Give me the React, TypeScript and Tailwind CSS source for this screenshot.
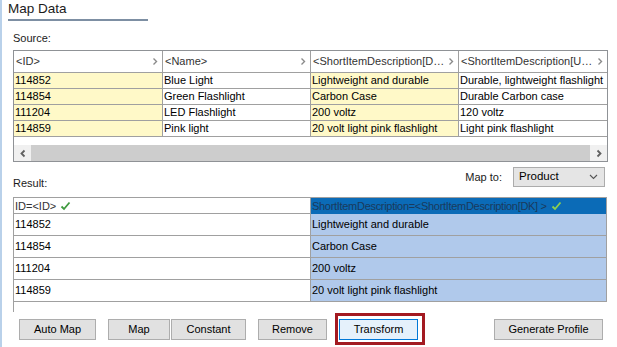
import React from "react";

const Chev = ({ color = "#8a8a8a" }: { color?: string }) => (
  <svg width="6" height="9" viewBox="0 0 6 9" className="shrink-0">
    <polyline points="1.5,1.5 4.5,4.5 1.5,7.5" fill="none" stroke={color} strokeWidth="1.4" />
  </svg>
);

const Check = ({ color }: { color: string }) => (
  <svg width="11" height="10" viewBox="0 0 11 10" className="shrink-0">
    <path d="M1.5 5.5 L4 8 L9.5 1.5" fill="none" stroke={color} strokeWidth="1.8" />
  </svg>
);

const source = [
  ["114852", "Blue Light", "Lightweight and durable", "Durable, lightweight flashlight"],
  ["114854", "Green Flashlight", "Carbon Case", "Durable Carbon case"],
  ["111204", "LED Flashlight", "200 voltz", "120 voltz"],
  ["114859", "Pink light", "20 volt light pink flashlight", "Light pink flashlight"],
];

const headers = ["<ID>", "<Name>", "<ShortItemDescription[D…", "<ShortItemDescription[U…"];

export default function App() {
  return (
    <div className="relative w-[617px] h-[347px] overflow-hidden bg-white border-l-2 border-[#b9d1ea] font-['Liberation_Sans',Arial,sans-serif] text-[11px] text-black">
      {/* Title */}
      <div className="pl-[6px] pt-[1px]">
        <div className="text-[13.5px] leading-[16px] text-[#1b1b1b]">Map Data</div>
        <div className="mt-[2px] w-[140px] h-[2px] bg-[#7d8fa3]" />
      </div>

      {/* Source label */}
      <div className="ml-[11px] mt-[11px] leading-[12px] text-[#1b1b1b]">Source:</div>

      {/* Source table */}
      <div className="ml-[11px] mt-[6px] w-[595px] h-[112px] border border-[#8f9296] flex flex-col">
        <div className="grid grid-cols-[149px_148px_148px_148px] h-[22px] border-b border-[#a0a0a0]">
          {headers.map((h, i) => (
            <div
              key={i}
              className={`flex items-center justify-between pl-[2px] pr-[4px] text-[#333] ${i < 3 ? "border-r border-[#a0a0a0]" : ""}`}
            >
              <span className="whitespace-nowrap">{h}</span>
              <Chev />
            </div>
          ))}
        </div>
        {source.map((r, ri) => (
          <div key={ri} className="grid grid-cols-[149px_148px_148px_148px] h-[16px] border-b border-[#a0a0a0]">
            {r.map((c, ci) => (
              <div
                key={ci}
                className={`flex items-center pl-[1px] leading-[15px] whitespace-nowrap overflow-hidden ${ci < 3 ? "border-r border-[#a0a0a0]" : ""} ${ci === 0 || ci === 2 ? "bg-[#fff9c8]" : "bg-white"}`}
              >
                {c}
              </div>
            ))}
          </div>
        ))}
        <div className="h-[8px]" />
        <div className="h-[16px] flex bg-[#f0f0f0]">
          <div className="w-[17px] flex items-center justify-center">
            <svg width="6" height="9" viewBox="0 0 6 9">
              <polyline points="4.5,1.5 1.5,4.5 4.5,7.5" fill="none" stroke="#606060" strokeWidth="1.8" />
            </svg>
          </div>
          <div className="flex-1 bg-[#cdcdcd]" />
          <div className="w-[17px] flex items-center justify-center">
            <svg width="6" height="9" viewBox="0 0 6 9">
              <polyline points="1.5,1.5 4.5,4.5 1.5,7.5" fill="none" stroke="#606060" strokeWidth="1.8" />
            </svg>
          </div>
        </div>
      </div>

      {/* Result label row */}
      <div className="ml-[11px] mt-[5px] w-[592px] h-[20px] flex items-start justify-between">
        <div className="pt-[10px] leading-[12px] text-[#1b1b1b]">Result:</div>
        <div className="flex items-center h-[20px]">
          <span className="text-[#1b1b1b] mr-[11px]">Map to:</span>
          <div className="w-[92px] h-[20px] bg-[#e5e5e5] border border-[#acacac] flex items-center justify-between pl-[5px] pr-[6px] text-[11.5px]">
            <span>Product</span>
            <svg width="9" height="6" viewBox="0 0 9 6">
              <polyline points="1,1 4.5,4.5 8,1" fill="none" stroke="#555" strokeWidth="1.1" />
            </svg>
          </div>
        </div>
      </div>

      {/* Result table */}
      <div className="ml-[11px] mt-[10px] w-[595px] h-[115px] border-l border-[#a0a0a0]">
        <div className="w-[593px] border-t border-r border-[#a0a0a0]">
          <div className="grid grid-cols-[297px_1fr] h-[16px] border-b border-[#a0a0a0]">
            <div className="flex items-center gap-[4px] pl-[1px] border-r border-[#a0a0a0] text-[#333]">
              <span>ID=&lt;ID&gt;</span>
              <Check color="#3f9a3f" />
            </div>
            <div className="flex items-center gap-[4px] pl-[1px] bg-[#0b6bb7] text-[#1a3a5c] whitespace-nowrap overflow-hidden">
              <span className="tracking-[-0.3px]">ShortItemDescription=&lt;ShortItemDescription[DK] &gt;</span>
              <Check color="#8fd04e" />
            </div>
          </div>
          {source.map((r, ri) => (
            <div key={ri} className="grid grid-cols-[297px_1fr] h-[22px] border-b border-[#a0a0a0]">
              <div className="flex items-center pl-[1px] border-r border-[#a0a0a0]">{r[0]}</div>
              <div className="flex items-center pl-[1px] bg-[#b0c9eb]">{r[2]}</div>
            </div>
          ))}
        </div>
      </div>

      {/* Buttons */}
      <div className="mt-[7px] flex items-center h-[21px]">
        <button className="ml-[17px] w-[77px] h-[21px] bg-[#e1e1e1] border border-[#adadad]">Auto Map</button>
        <button className="ml-[12px] w-[62px] h-[21px] bg-[#e1e1e1] border border-[#adadad]">Map</button>
        <button className="ml-[1px] w-[75px] h-[21px] bg-[#e1e1e1] border border-[#adadad]">Constant</button>
        <button className="ml-[12px] w-[69px] h-[21px] bg-[#e1e1e1] border border-[#adadad]">Remove</button>
        <button className="ml-[12px] w-[79px] h-[21px] bg-[#e5f1fb] border border-[#0078d7]">Transform</button>
        <button className="ml-[76px] w-[109px] h-[21px] bg-[#e1e1e1] border border-[#adadad]">Generate Profile</button>
      </div>

      {/* Red highlight frame */}
      <div className="absolute left-[333px] top-[313px] w-[90px] h-[32px] border-[3px] border-[#a31a21]" />
    </div>
  );
}
